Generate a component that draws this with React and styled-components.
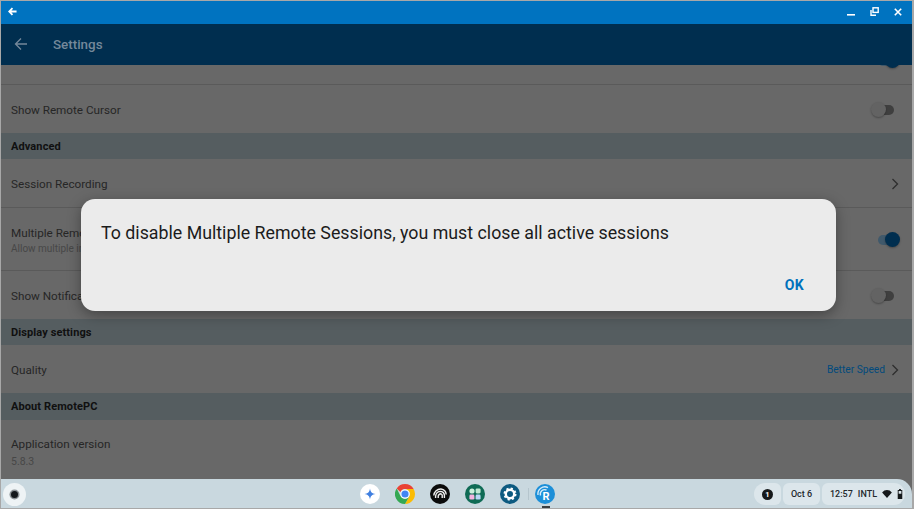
import React from "react";
import styled, { createGlobalStyle } from "styled-components";

const Global = createGlobalStyle`
  html, body { margin: 0; padding: 0; background: #a8a8a8; overflow: hidden; }
  * { box-sizing: border-box; }
  #root { width: 914px; height: 509px; }
`;

const Page = styled.div`
  position: relative;
  width: 914px;
  height: 509px;
  padding: 1px 2px 1px 1px;
  display: flex;
  flex-direction: column;
  font-family: Roboto, "Liberation Sans", sans-serif;
  overflow: hidden;
`;
const TitleBar = styled.div`
  height: 23px;
  flex: none;
  background: #0073c0;
  display: flex;
  align-items: center;
  padding: 0 10px 2px 7px;
`;
const WinButtons = styled.div`
  margin-left: auto;
  display: flex;
  align-items: center;
  gap: 15px;
`;
const AppBar = styled.div`
  height: 41px;
  flex: none;
  background: #002e4f;
  display: flex;
  align-items: center;
  padding: 0 0 1px 13px;
  position: relative;
  z-index: 1;
`;
const AppTitle = styled.div`
  margin-left: 25px;
  font-size: 13.4px;
  font-weight: 500;
  color: #74889a;
`;
const Content = styled.div`
  flex: 1;
  min-height: 0;
  background: #686868;
  overflow: hidden;
`;
const Row = styled.div`
  height: ${p => p.$h || 48}px;
  margin-top: ${p => p.$mt || 0}px;
  display: flex;
  align-items: center;
  justify-content: space-between;
  padding: 1px 13px 0 10px;
  border-bottom: ${p => (p.$line ? "1px solid #5a5a5a" : "none")};
`;
const Labels = styled.div`
  display: flex;
  flex-direction: column;
  gap: ${p => p.$gap || 3}px;
`;
const Label = styled.div`
  font-size: 11.7px;
  color: #262626;
`;
const Sub = styled.div`
  font-size: ${p => p.$size || 10}px;
  color: #474747;
`;
const Section = styled.div`
  height: ${p => p.$h || 26}px;
  background: #555d60;
  display: flex;
  align-items: center;
  padding-left: 10px;
  font-size: 11px;
  font-weight: 700;
  color: #101010;
  letter-spacing: 0.1px;
`;
const Track = styled.div`
  position: relative;
  width: 19px;
  height: 10px;
  border-radius: 5px;
  margin-right: ${p => (p.$on ? 2 : 5)}px;
  background: ${p => (p.$on ? "#40596b" : "#3f3f3f")};
`;
const Knob = styled.div`
  position: absolute;
  top: -3px;
  ${p => (p.$on ? "right: -3px;" : "left: -4px;")}
  width: 15px;
  height: 15px;
  border-radius: 50%;
  background: ${p => (p.$on ? "#002e4f" : "#636363")};
  box-shadow: 0 1px 2px rgba(0, 0, 0, 0.3);
`;
const Value = styled.div`
  display: flex;
  align-items: center;
  gap: 6px;
  font-size: 10.2px;
  color: #014a7d;
`;
const Scrim = styled.div`
  position: absolute;
  inset: 0;
  display: flex;
  justify-content: flex-start;
  align-items: flex-start;
  pointer-events: none;
`;
const Dialog = styled.div`
  margin: 199px 0 0 81px;
  width: 755px;
  height: 112px;
  background: #ebebeb;
  border-radius: 14px;
  box-shadow: 0 4px 14px rgba(0, 0, 0, 0.35);
  padding: 23px 20px 0;
  display: flex;
  flex-direction: column;
  justify-content: space-between;
`;
const Message = styled.div`
  font-size: 17.8px;
  line-height: 22px;
  color: #1b1b1b;
`;
const OkButton = styled.div`
  align-self: flex-end;
  margin: 0 12px 18px 0;
  font-size: 14px;
  font-weight: 700;
  letter-spacing: 0.4px;
  color: #0071bc;
`;
const Shelf = styled.div`
  position: relative;
  height: 29px;
  flex: none;
  margin-top: -29px;
  z-index: 2;
  background: #c9d8df;
  border-radius: 0 15px 0 0;
  display: flex;
  align-items: center;
`;
const Launcher = styled.div`
  position: absolute;
  left: 2px;
  top: 4px;
  width: 23px;
  height: 23px;
  border-radius: 50%;
  background: #eef3f5;
  display: flex;
  align-items: center;
  justify-content: center;
`;
const LauncherDot = styled.div`
  width: 7px;
  height: 7px;
  border-radius: 50%;
  background: #14181b;
  box-shadow: 0 0 0 1.5px #8a9094;
`;
const Apps = styled.div`
  position: absolute;
  left: 359px;
  top: 5px;
  display: flex;
  gap: 15px;
`;
const AppIcon = styled.svg`
  width: 20px;
  height: 20px;
  display: block;
`;
const Separator = styled.div`
  position: absolute;
  left: 168px;
  top: 4px;
  width: 1px;
  height: 12px;
  background: #b5c5cd;
`;
const Active = styled.div`
  position: absolute;
  left: 182px;
  top: 22px;
  width: 8px;
  height: 1.5px;
  background: #3a3f42;
`;
const Tray = styled.div`
  margin-left: auto;
  margin-right: 7px;
  padding-top: 1px;
  display: flex;
  gap: 2px;
`;
const Pill = styled.div`
  height: 22px;
  width: ${p => p.$w}px;
  display: flex;
  align-items: center;
  justify-content: ${p => (p.$start ? "flex-start" : "center")};
  gap: 5px;
  padding-left: ${p => p.$pl || 0}px;
  background: #dce6eb;
  border-radius: ${p => p.$r || "6px"};
  font-size: 9px;
  font-weight: 500;
  color: #22282b;
`;
const Badge = styled.div`
  width: 11px;
  height: 11px;
  border-radius: 50%;
  background: #16191b;
  color: #fff;
  font-size: 7.5px;
  font-weight: 700;
  display: flex;
  align-items: center;
  justify-content: center;
`;

const Toggle = ({ on }) => (
  <Track $on={on}>
    <Knob $on={on} />
  </Track>
);

const Chevron = ({ color = "#2e2e2e" }) => (
  <svg width="8" height="12" viewBox="0 0 8 12" fill="none" stroke={color} strokeWidth="1.3">
    <path d="M1.5 1 L6.5 6 L1.5 11" />
  </svg>
);

export default function App() {
  return (
    <>
      <Global />
      <Page>
        <TitleBar>
          <svg width="9" height="9" viewBox="0 0 10 10" fill="none" stroke="#fff" strokeWidth="2">
            <path d="M9.5 5H2M5 1.2 1.4 5 5 8.8" />
          </svg>
          <WinButtons>
            <svg width="8" height="8" viewBox="0 0 8 8" fill="#fff"><rect y="6" width="8" height="1.6" /></svg>
            <svg width="9" height="9" viewBox="0 0 9 9" fill="none" stroke="#fff" strokeWidth="1.4">
              <rect x="3" y="0.8" width="5.2" height="4.6" />
              <path d="M1 3v5.2h5" />
            </svg>
            <svg width="8" height="8" viewBox="0 0 8 8" fill="none" stroke="#fff" strokeWidth="1.6">
              <path d="M0.8 0.8 7.2 7.2M7.2 0.8 0.8 7.2" />
            </svg>
          </WinButtons>
        </TitleBar>
        <AppBar>
          <svg width="14" height="14" viewBox="0 0 14 14" fill="none" stroke="#74889a" strokeWidth="1.3">
            <path d="M13 7H1.5M7 1.5 1.5 7 7 12.5" />
          </svg>
          <AppTitle>Settings</AppTitle>
        </AppBar>
        <Content>
          <Row $mt={-28} $line>
            <span />
            <Toggle on />
          </Row>
          <Row>
            <Label>Show Remote Cursor</Label>
            <Toggle />
          </Row>
          <Section>Advanced</Section>
          <Row $line $h={49}>
            <Label>Session Recording</Label>
            <Chevron />
          </Row>
          <Row $line $h={63}>
            <Labels>
              <Label>Multiple Remote Sessions</Label>
              <Sub>Allow multiple instances</Sub>
            </Labels>
            <Toggle on />
          </Row>
          <Row>
            <Label>Show Notification</Label>
            <Toggle />
          </Row>
          <Section>Display settings</Section>
          <Row>
            <Label>Quality</Label>
            <Value>
              Better Speed
              <Chevron />
            </Value>
          </Row>
          <Section $h={27}>About RemotePC</Section>
          <Row $h={64}>
            <Labels $gap={4}>
              <Label>Application version</Label>
              <Sub $size={10.5}>5.8.3</Sub>
            </Labels>
          </Row>
        </Content>
        <Shelf>
          <Launcher><LauncherDot /></Launcher>
          <Apps>
            <AppIcon viewBox="0 0 20 20">
              <circle cx="10" cy="10" r="10" fill="#fff" />
              <path d="M10 4.5C10.5 8 12 9.5 15.5 10 12 10.5 10.5 12 10 15.5 9.5 12 8 10.5 4.5 10 8 9.5 9.5 8 10 4.5Z" fill="#3f7fe0" />
            </AppIcon>
            <AppIcon viewBox="0 0 20 20">
              <path d="M10 0a10 10 0 0 1 8.66 5H10a5 5 0 0 0-4.6 3L1.7 4.4A10 10 0 0 1 10 0Z" fill="#ea4335" />
              <path d="M18.66 5A10 10 0 0 1 10 20l4.3-7.5A5 5 0 0 0 14.3 7.5 5 5 0 0 0 10 5Z" fill="#fbbc04" />
              <path d="M10 20A10 10 0 0 1 1.7 4.4L5.7 12.5A5 5 0 0 0 14.3 12.5Z" fill="#34a853" />
              <circle cx="10" cy="10" r="4.6" fill="#fff" />
              <circle cx="10" cy="10" r="3.6" fill="#4285f4" />
            </AppIcon>
            <AppIcon viewBox="0 0 20 20">
              <circle cx="10" cy="10" r="10" fill="#0b0b0b" />
              <g fill="none" stroke="#eee" strokeWidth="1.4">
                <path d="M3.8 11.5A7 7 0 0 1 11 5a6 6 0 0 1 5.2 5.5" />
                <path d="M5.6 14v-2a5.4 5.4 0 0 1 5.4-4.6 4 4 0 0 1 3.4 3.4V14" />
                <path d="M8.2 14v-1.6A3 3 0 0 1 11 9.8a1.8 1.8 0 0 1 1.2 1.6V14" />
              </g>
            </AppIcon>
            <AppIcon viewBox="0 0 20 20">
              <circle cx="10" cy="10" r="10" fill="#0f6b55" />
              <circle cx="7" cy="7" r="2.6" fill="#c9f0dc" />
              <rect x="10.6" y="4.4" width="5" height="5" rx="1.3" fill="#bfe9d2" />
              <rect x="4.4" y="10.6" width="5" height="5" rx="1.3" fill="#f3b4e0" />
              <rect x="10.6" y="10.6" width="5" height="5" rx="1.3" fill="#b9d7f5" />
            </AppIcon>
            <AppIcon viewBox="0 0 20 20">
              <circle cx="10" cy="10" r="10" fill="#0d5a80" />
              <circle cx="10" cy="10" r="4.2" fill="none" stroke="#fff" strokeWidth="2.4" />
              <circle cx="10" cy="10" r="5.6" fill="none" stroke="#fff" strokeWidth="1.8" strokeDasharray="2.2 2.2" />
            </AppIcon>
            <AppIcon viewBox="0 0 20 20">
              <circle cx="10" cy="10" r="10" fill="#1c8fd8" />
              <path d="M3 11A7 7 0 0 1 13 3.6M5.5 11.5A4.5 4.5 0 0 1 11.5 6" fill="none" stroke="#d5ecfa" strokeWidth="1.4" />
              <text x="7.5" y="16" fontFamily="Roboto, sans-serif" fontWeight="700" fontSize="11" fill="#fff">R</text>
            </AppIcon>
            <Separator />
            <Active />
          </Apps>
          <Tray>
            <Pill $w={27} $r="11px 6px 6px 11px"><Badge>1</Badge></Pill>
            <Pill $w={37}>Oct 6</Pill>
            <Pill $w={83} $start $pl={8} $r="6px 11px 11px 6px">
              <span>12:57</span>
              <span>INTL</span>
              <svg width="10" height="8" viewBox="0 0 11 9" fill="#16191b"><path d="M0 2.8C3 -0.9 8 -0.9 11 2.8L5.5 9Z" /></svg>
              <svg width="6" height="10" viewBox="0 0 6 11" fill="#16191b">
                <path d="M2 0h2v1h1.5v10H.5V1H2Z" />
                <rect x="1.5" y="2.2" width="3" height="3" fill="#dce6eb" />
              </svg>
            </Pill>
          </Tray>
        </Shelf>
        <Scrim>
          <Dialog>
            <Message>To disable Multiple Remote Sessions, you must close all active sessions</Message>
            <OkButton>OK</OkButton>
          </Dialog>
        </Scrim>
      </Page>
    </>
  );
}
